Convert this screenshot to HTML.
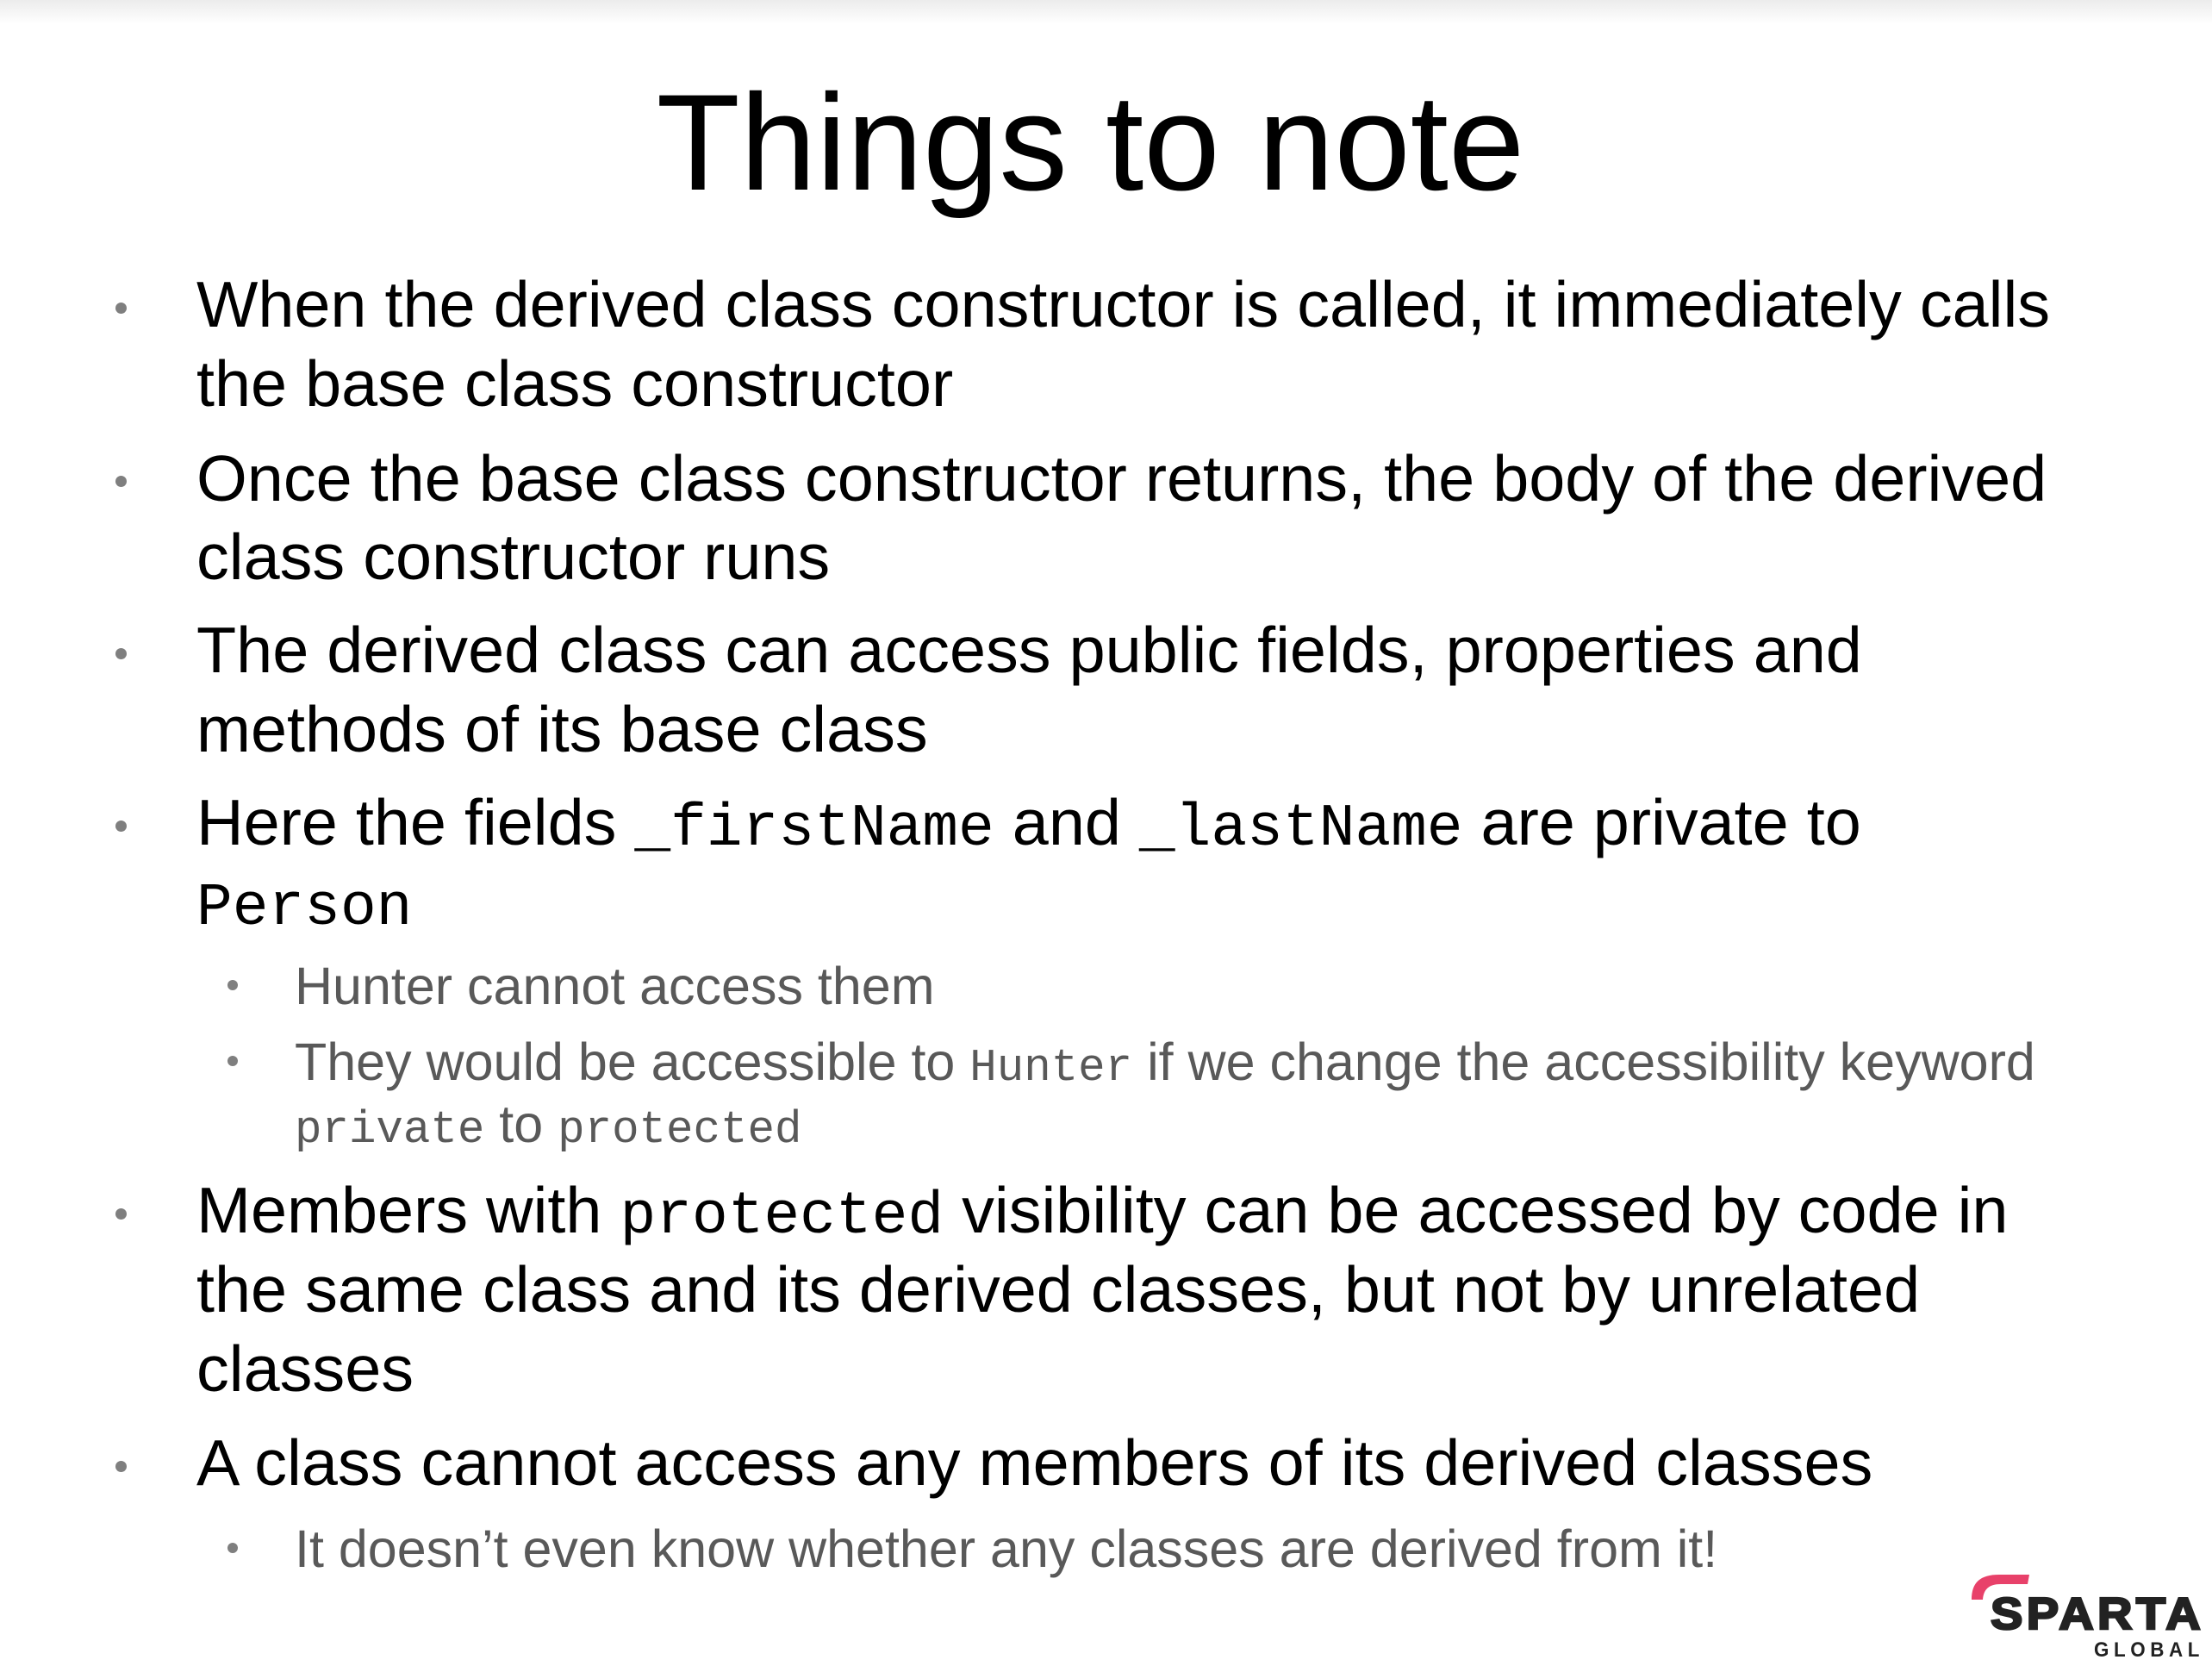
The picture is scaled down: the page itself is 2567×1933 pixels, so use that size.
<!DOCTYPE html>
<html><head><meta charset="utf-8"><style>
html,body{margin:0;padding:0}
body{width:2567px;height:1933px;position:relative;overflow:hidden;background:#fff;font-family:"Liberation Sans",Arial,sans-serif;color:#000}
.top{position:absolute;left:0;top:0;width:2567px;height:28px;background:linear-gradient(#ececec,#fff)}
.l{position:absolute;white-space:nowrap;line-height:1}
.m{position:absolute;font-size:75.6px;left:228px}
.s{position:absolute;font-size:61px;left:342px;color:#595959}
.b{position:absolute;width:13px;height:13px;border-radius:50%;background:#7f7f7f}
.sb{position:absolute;width:12px;height:12px;border-radius:50%;background:#7f7f7f}
code{font-family:"Liberation Mono",monospace;font-size:0.92em}
.s code{font-size:0.86em}
</style></head><body>
<div class="top"></div>
<div class="l" style="left:-18px;width:2567px;text-align:center;top:86px;font-size:159px;">Things to note</div>

<div class="b" style="left:134px;top:351px"></div>
<div class="l m" style="top:317px">When the derived class constructor is called, it immediately calls</div>
<div class="l m" style="top:409px">the base class constructor</div>

<div class="b" style="left:134px;top:552px"></div>
<div class="l m" style="top:519px">Once the base class constructor returns, the body of the derived</div>
<div class="l m" style="top:610px">class constructor runs</div>

<div class="b" style="left:134px;top:752px"></div>
<div class="l m" style="top:718px">The derived class can access public fields, properties and</div>
<div class="l m" style="top:810px">methods of its base class</div>

<div class="b" style="left:134px;top:952px"></div>
<div class="l m" style="top:918px">Here the fields <code>_firstName</code> and <code>_lastName</code> are private to</div>
<div class="l m" style="top:1010px"><code>Person</code></div>

<div class="sb" style="left:264px;top:1137px"></div>
<div class="l s" style="top:1114px">Hunter cannot access them</div>
<div class="sb" style="left:264px;top:1225px"></div>
<div class="l s" style="top:1202px">They would be accessible to <code>Hunter</code> if we change the accessibility keyword</div>
<div class="l s" style="top:1274px"><code>private</code> to <code>protected</code></div>

<div class="b" style="left:134px;top:1402px"></div>
<div class="l m" style="top:1368px">Members with <code>protected</code> visibility can be accessed by code in</div>
<div class="l m" style="top:1460px">the same class and its derived classes, but not by unrelated</div>
<div class="l m" style="top:1552px">classes</div>

<div class="b" style="left:134px;top:1695px"></div>
<div class="l m" style="top:1661px">A class cannot access any members of its derived classes</div>
<div class="sb" style="left:264px;top:1790px"></div>
<div class="l s" style="top:1767px">It doesn’t even know whether any classes are derived from it!</div>

<svg style="position:absolute;left:2280px;top:1818px" width="287" height="115" viewBox="0 0 287 115">
<path d="M8 38 C8 18 18 9 40 9 L75 9 L73 20 L42 20 C28 20 22 26 21 38 Z" fill="#e8416a"/>
<text x="30" y="72" font-family="Liberation Sans, sans-serif" font-weight="bold" font-size="52" fill="#222" stroke="#222" stroke-width="2.5" letter-spacing="4" textLength="248" lengthAdjust="spacingAndGlyphs">SPARTA</text>
<text x="150" y="104" font-family="Liberation Sans, sans-serif" font-weight="bold" font-size="24" fill="#222" letter-spacing="6" textLength="128" lengthAdjust="spacingAndGlyphs">GLOBAL</text>
</svg>
</body></html>
